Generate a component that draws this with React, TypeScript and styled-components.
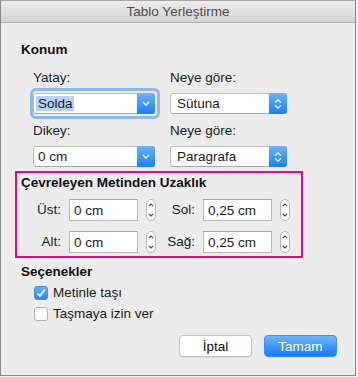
import React from 'react';
import styled, { createGlobalStyle } from 'styled-components';

const GlobalStyle = createGlobalStyle`
  body {
    margin: 0;
    background: #f2f2f2;
    font-family: "Liberation Sans", Arial, sans-serif;
    font-size: 13.5px;
    color: #1b1b1b;
  }
`;

const Window = styled.div`
  width: 356px;
  height: 376px;
  box-sizing: border-box;
  border: 1px solid #8c8c8c;
  border-top-color: #a8a8a8;
  background: #ececec;
  display: flex;
  flex-direction: column;
`;

const TitleBar = styled.div`
  height: 21px;
  border-bottom: 1px solid #b0b0b0;
  background: linear-gradient(#ececec, #d3d3d3);
  display: flex;
  align-items: center;
  justify-content: center;
  color: #4b4b4b;
  font-size: 13.5px;
`;

const Body = styled.div`
  padding: 0 18px 0 14px;
  display: flex;
  flex-direction: column;
`;

const SectionTitle = styled.div<{ $top: number }>`
  margin-top: ${p => p.$top}px;
  padding-left: 6px;
  font-weight: bold;
  line-height: 16px;
  color: #111;
`;

const FieldGrid = styled.div`
  margin: 12px 0 0 18px;
  display: grid;
  grid-template-columns: 122px 117px;
  column-gap: 15px;
  row-gap: 9px;
`;

const Field = styled.div`
  display: flex;
  flex-direction: column;
  gap: 7px;
`;

const FieldLabel = styled.div`
  line-height: 16px;
`;

const SelectBox = styled.div<{ $focused?: boolean }>`
  position: relative;
  height: 21px;
  box-sizing: border-box;
  border: 1px solid #bdbdbd;
  border-bottom-color: #a9a9a9;
  border-radius: 3px;
  background: #fff;
  display: flex;
  align-items: center;

  ${p => p.$focused && `
    &::after {
      content: '';
      position: absolute;
      top: -6px;
      left: -4px;
      right: -6px;
      bottom: -6px;
      border: 3px solid #8fb8ec;
      border-radius: 6px;
      pointer-events: none;
    }
  `}
`;

const SelectValue = styled.div<{ $pad: number }>`
  flex: 1;
  padding-left: ${p => p.$pad}px;
  line-height: 16px;
`;

const Highlight = styled.span`
  background: #b4d4fc;
  padding: 0 1px 0 2px;
  margin-left: -2px;
`;

const BlueButton = styled.div`
  width: 18px;
  align-self: stretch;
  margin: -1px -1px -1px 0;
  border-radius: 0 3px 3px 0;
  background: linear-gradient(#6cb3fa, #1b7ffa);
  display: flex;
  align-items: center;
  justify-content: center;
`;

const DistanceBox = styled.div`
  margin: 4px 0 0 0;
  width: 288px;
  box-sizing: border-box;
  border: 2px solid #e5097f;
  padding: 2px 0 3px 0;
  display: flex;
  flex-direction: column;
`;

const BoxTitle = styled.div`
  padding-left: 4px;
  font-weight: bold;
  line-height: 16px;
  margin-bottom: 8px;
  color: #111;
`;

const SpinRow = styled.div<{ $gap?: number }>`
  display: flex;
  align-items: center;
  gap: 8px;
  height: 22px;
  margin-bottom: ${p => p.$gap ?? 0}px;
`;

const SpinLabel = styled.div<{ $width: number }>`
  width: ${p => p.$width}px;
  text-align: right;
  line-height: 16px;
`;

const NumberInput = styled.div`
  width: 69px;
  height: 22px;
  box-sizing: border-box;
  border: 1px solid #b9b9b9;
  border-top-color: #a5a5a5;
  background: #fff;
  padding-left: 4px;
  display: flex;
  align-items: center;
`;

const Stepper = styled.div`
  width: 10px;
  height: 22px;
  box-sizing: border-box;
  border: 1px solid #b5b5b5;
  border-radius: 5px;
  background: #fff;
  display: flex;
  align-items: center;
  justify-content: center;
`;

const CheckList = styled.div`
  margin: 6px 0 0 19px;
  display: flex;
  flex-direction: column;
  gap: 7px;
`;

const CheckRow = styled.div`
  display: flex;
  align-items: center;
  gap: 5px;
  height: 14px;
  line-height: 14px;
`;

const CheckBox = styled.div<{ $checked?: boolean }>`
  width: 14px;
  height: 14px;
  box-sizing: border-box;
  border-radius: 3px;
  border: 1px solid ${p => (p.$checked ? '#3d8ef5' : '#b1b1b1')};
  background: ${p => (p.$checked ? 'linear-gradient(#66aefa, #2c86f7)' : '#fff')};
  display: flex;
  align-items: center;
  justify-content: center;
`;

const ButtonRow = styled.div`
  margin-top: 14px;
  display: flex;
  justify-content: flex-end;
  gap: 12px;
`;

const DialogButton = styled.div<{ $primary?: boolean }>`
  width: 73px;
  height: 22px;
  box-sizing: border-box;
  border-radius: 4px;
  border: 1px solid ${p => (p.$primary ? '#3f8cf2' : '#c3c3c3')};
  background: ${p => (p.$primary ? 'linear-gradient(#6fb5fb, #147cfc)' : '#fff')};
  color: ${p => (p.$primary ? '#fff' : '#111')};
  display: flex;
  align-items: center;
  justify-content: center;
  box-shadow: 0 1px 0 rgba(0, 0, 0, 0.06);
`;

const ChevronDown = () => (
  <svg width="8" height="5" viewBox="0 0 8 5">
    <path d="M1 1 L4 4 L7 1" fill="none" stroke="#fff" strokeWidth="1.3" />
  </svg>
);

const UpDown = () => (
  <svg width="8" height="12" viewBox="0 0 8 12">
    <path d="M1.2 4.5 L4 1.8 L6.8 4.5" fill="none" stroke="#fff" strokeWidth="1.3" />
    <path d="M1.2 7.5 L4 10.2 L6.8 7.5" fill="none" stroke="#fff" strokeWidth="1.3" />
  </svg>
);

const Check = () => (
  <svg width="12" height="12" viewBox="0 0 12 12">
    <path d="M2.5 6.5 L5 9 L9.8 2.6" fill="none" stroke="#fff" strokeWidth="1.7" />
  </svg>
);

const SpinStepper = () => (
  <Stepper>
    <svg width="6" height="16" viewBox="0 0 6 16">
      <path d="M0.8 4.2 L3 2 L5.2 4.2" fill="none" stroke="#444" strokeWidth="1.1" />
      <path d="M0.8 11.8 L3 14 L5.2 11.8" fill="none" stroke="#444" strokeWidth="1.1" />
    </svg>
  </Stepper>
);

const App: React.FC = () => {
  return (
    <>
      <GlobalStyle />
      <Window>
        <TitleBar>Tablo Yerleştirme</TitleBar>
        <Body>
          <SectionTitle $top={19}>Konum</SectionTitle>
          <FieldGrid>
            <Field>
              <FieldLabel>Yatay:</FieldLabel>
              <SelectBox $focused>
                <SelectValue $pad={4}><Highlight>Solda</Highlight></SelectValue>
                <BlueButton><ChevronDown /></BlueButton>
              </SelectBox>
            </Field>
            <Field>
              <FieldLabel>Neye göre:</FieldLabel>
              <SelectBox>
                <SelectValue $pad={6}>Sütuna</SelectValue>
                <BlueButton><UpDown /></BlueButton>
              </SelectBox>
            </Field>
            <Field>
              <FieldLabel>Dikey:</FieldLabel>
              <SelectBox>
                <SelectValue $pad={4}>0 cm</SelectValue>
                <BlueButton><ChevronDown /></BlueButton>
              </SelectBox>
            </Field>
            <Field>
              <FieldLabel>Neye göre:</FieldLabel>
              <SelectBox>
                <SelectValue $pad={6}>Paragrafa</SelectValue>
                <BlueButton><UpDown /></BlueButton>
              </SelectBox>
            </Field>
          </FieldGrid>

          <DistanceBox>
            <BoxTitle>Çevreleyen Metinden Uzaklık</BoxTitle>
            <SpinRow $gap={10}>
              <SpinLabel $width={44}>Üst:</SpinLabel>
              <NumberInput>0 cm</NumberInput>
              <SpinStepper />
              <SpinLabel $width={31}>Sol:</SpinLabel>
              <NumberInput>0,25 cm</NumberInput>
              <SpinStepper />
            </SpinRow>
            <SpinRow>
              <SpinLabel $width={44}>Alt:</SpinLabel>
              <NumberInput>0 cm</NumberInput>
              <SpinStepper />
              <SpinLabel $width={31}>Sağ:</SpinLabel>
              <NumberInput>0,25 cm</NumberInput>
              <SpinStepper />
            </SpinRow>
          </DistanceBox>

          <SectionTitle $top={6}>Seçenekler</SectionTitle>
          <CheckList>
            <CheckRow>
              <CheckBox $checked><Check /></CheckBox>
              Metinle taşı
            </CheckRow>
            <CheckRow>
              <CheckBox />
              Taşmaya izin ver
            </CheckRow>
          </CheckList>

          <ButtonRow>
            <DialogButton>İptal</DialogButton>
            <DialogButton $primary>Tamam</DialogButton>
          </ButtonRow>
        </Body>
      </Window>
    </>
  );
};

export default App;
